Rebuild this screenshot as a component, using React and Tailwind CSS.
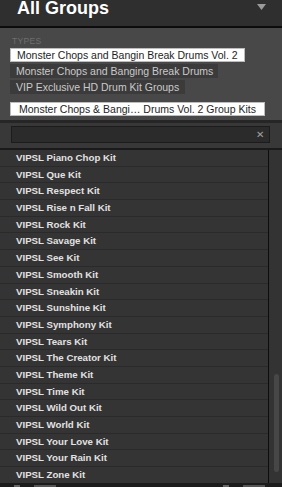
import React from 'react';

const kits = [
  'Piano Chop Kit', 'Que Kit', 'Respect Kit', 'Rise n Fall Kit', 'Rock Kit',
  'Savage Kit', 'See Kit', 'Smooth Kit', 'Sneakin Kit', 'Sunshine Kit',
  'Symphony Kit', 'Tears Kit', 'The Creator Kit', 'Theme Kit', 'Time Kit',
  'Wild Out Kit', 'World Kit', 'Your Love Kit', 'Your Rain Kit', 'Zone Kit',
];

const font = { fontFamily: '"Liberation Sans", Arial, sans-serif' };

export default function App() {
  return (
    <div className="w-[282px] h-[487px] overflow-hidden bg-[#2e2e2e] flex flex-col" style={font}>
      {/* header */}
      <div className="h-[26px] shrink-0 bg-[#2f2f2f] flex items-start justify-between pl-[17px] pr-[16px]">
        <span className="text-[18px] font-bold leading-[18px] -mt-[1px] text-white">All Groups</span>
        <svg width="9" height="6" viewBox="0 0 9 6" className="mt-[4px]">
          <path d="M0 0 H9 L4.5 6 Z" fill="#9a9a9a" />
        </svg>
      </div>
      <div className="h-[2px] shrink-0 bg-[#0c0c0c]" />

      {/* types */}
      <div className="h-[92px] shrink-0 bg-[#484848] px-[10px] pt-[8px] flex flex-col items-start">
        <div className="text-[8.5px] leading-[10px] text-[#6e6e6e] pl-[2px] tracking-[0.3px]">TYPES</div>
        <div className="mt-[2px] h-[14px] w-[235px] bg-white border border-[#bdbdbd] text-[10.5px] leading-[12px] text-[#1e1e1e] pl-[6px] whitespace-nowrap">
          Monster Chops and Bangin Break Drums Vol. 2
        </div>
        <div className="mt-[2px] h-[14px] bg-[#3b3b3b] text-[10.5px] leading-[14px] text-[#cacaca] pl-[6px] pr-[5px] whitespace-nowrap">
          Monster Chops and Banging Break Drums
        </div>
        <div className="mt-[2px] h-[14px] bg-[#3b3b3b] text-[10.5px] leading-[14px] text-[#cacaca] pl-[6px] pr-[6px] whitespace-nowrap">
          VIP Exclusive HD Drum Kit Groups
        </div>
        <div className="mt-[8px] h-[14px] w-[255px] bg-white border border-[#bdbdbd] text-[10.5px] leading-[12px] text-[#1e1e1e] pl-[8px] whitespace-nowrap">
          Monster Chops &amp; Bangi… Drums Vol. 2 Group Kits
        </div>
      </div>
      <div className="h-[3px] shrink-0 bg-[#262626]" />

      {/* search */}
      <div className="h-[25px] shrink-0 bg-[#383838] px-[11px] pt-[3px]">
        <div className="h-[17px] w-[259px] bg-[#2b2b2b] border border-[#1c1c1c] flex items-center justify-end pr-[5px]">
          <span className="text-[10px] leading-[10px] text-[#a0a0a0]">✕</span>
        </div>
      </div>
      <div className="h-[2px] shrink-0 bg-[#1a1a1a]" />

      {/* list */}
      <div className="flex-1 flex min-h-0">
        <div className="w-[268px] bg-[#343434] flex flex-col">
          {kits.map((k) => (
            <div key={k} className="h-[16.7px] shrink-0 border-b border-[#2a2a2a] pl-[16px] text-[9.7px] font-bold leading-[16px] text-[#e2e2e2]">
              VIPSL {k}
            </div>
          ))}
        </div>
        <div className="w-px bg-[#0d0d0d]" />
        <div className="flex-1 bg-[#333333] relative">
          <div className="absolute left-[5px] w-[5px] top-[224px] h-[98px] rounded-full bg-[#474747]" />
        </div>
      </div>
      <div className="h-[4px] shrink-0 bg-[#1c1c1c] flex items-end">
        <div className="ml-[14px] w-[6px] h-[2px] bg-[#666]" />
        <div className="ml-[14px] w-[22px] h-[2px] bg-[#555]" />
        <div className="ml-[167px] w-[6px] h-[2px] bg-[#666]" />
        <div className="ml-[14px] w-[22px] h-[2px] bg-[#555]" />
      </div>
    </div>
  );
}
